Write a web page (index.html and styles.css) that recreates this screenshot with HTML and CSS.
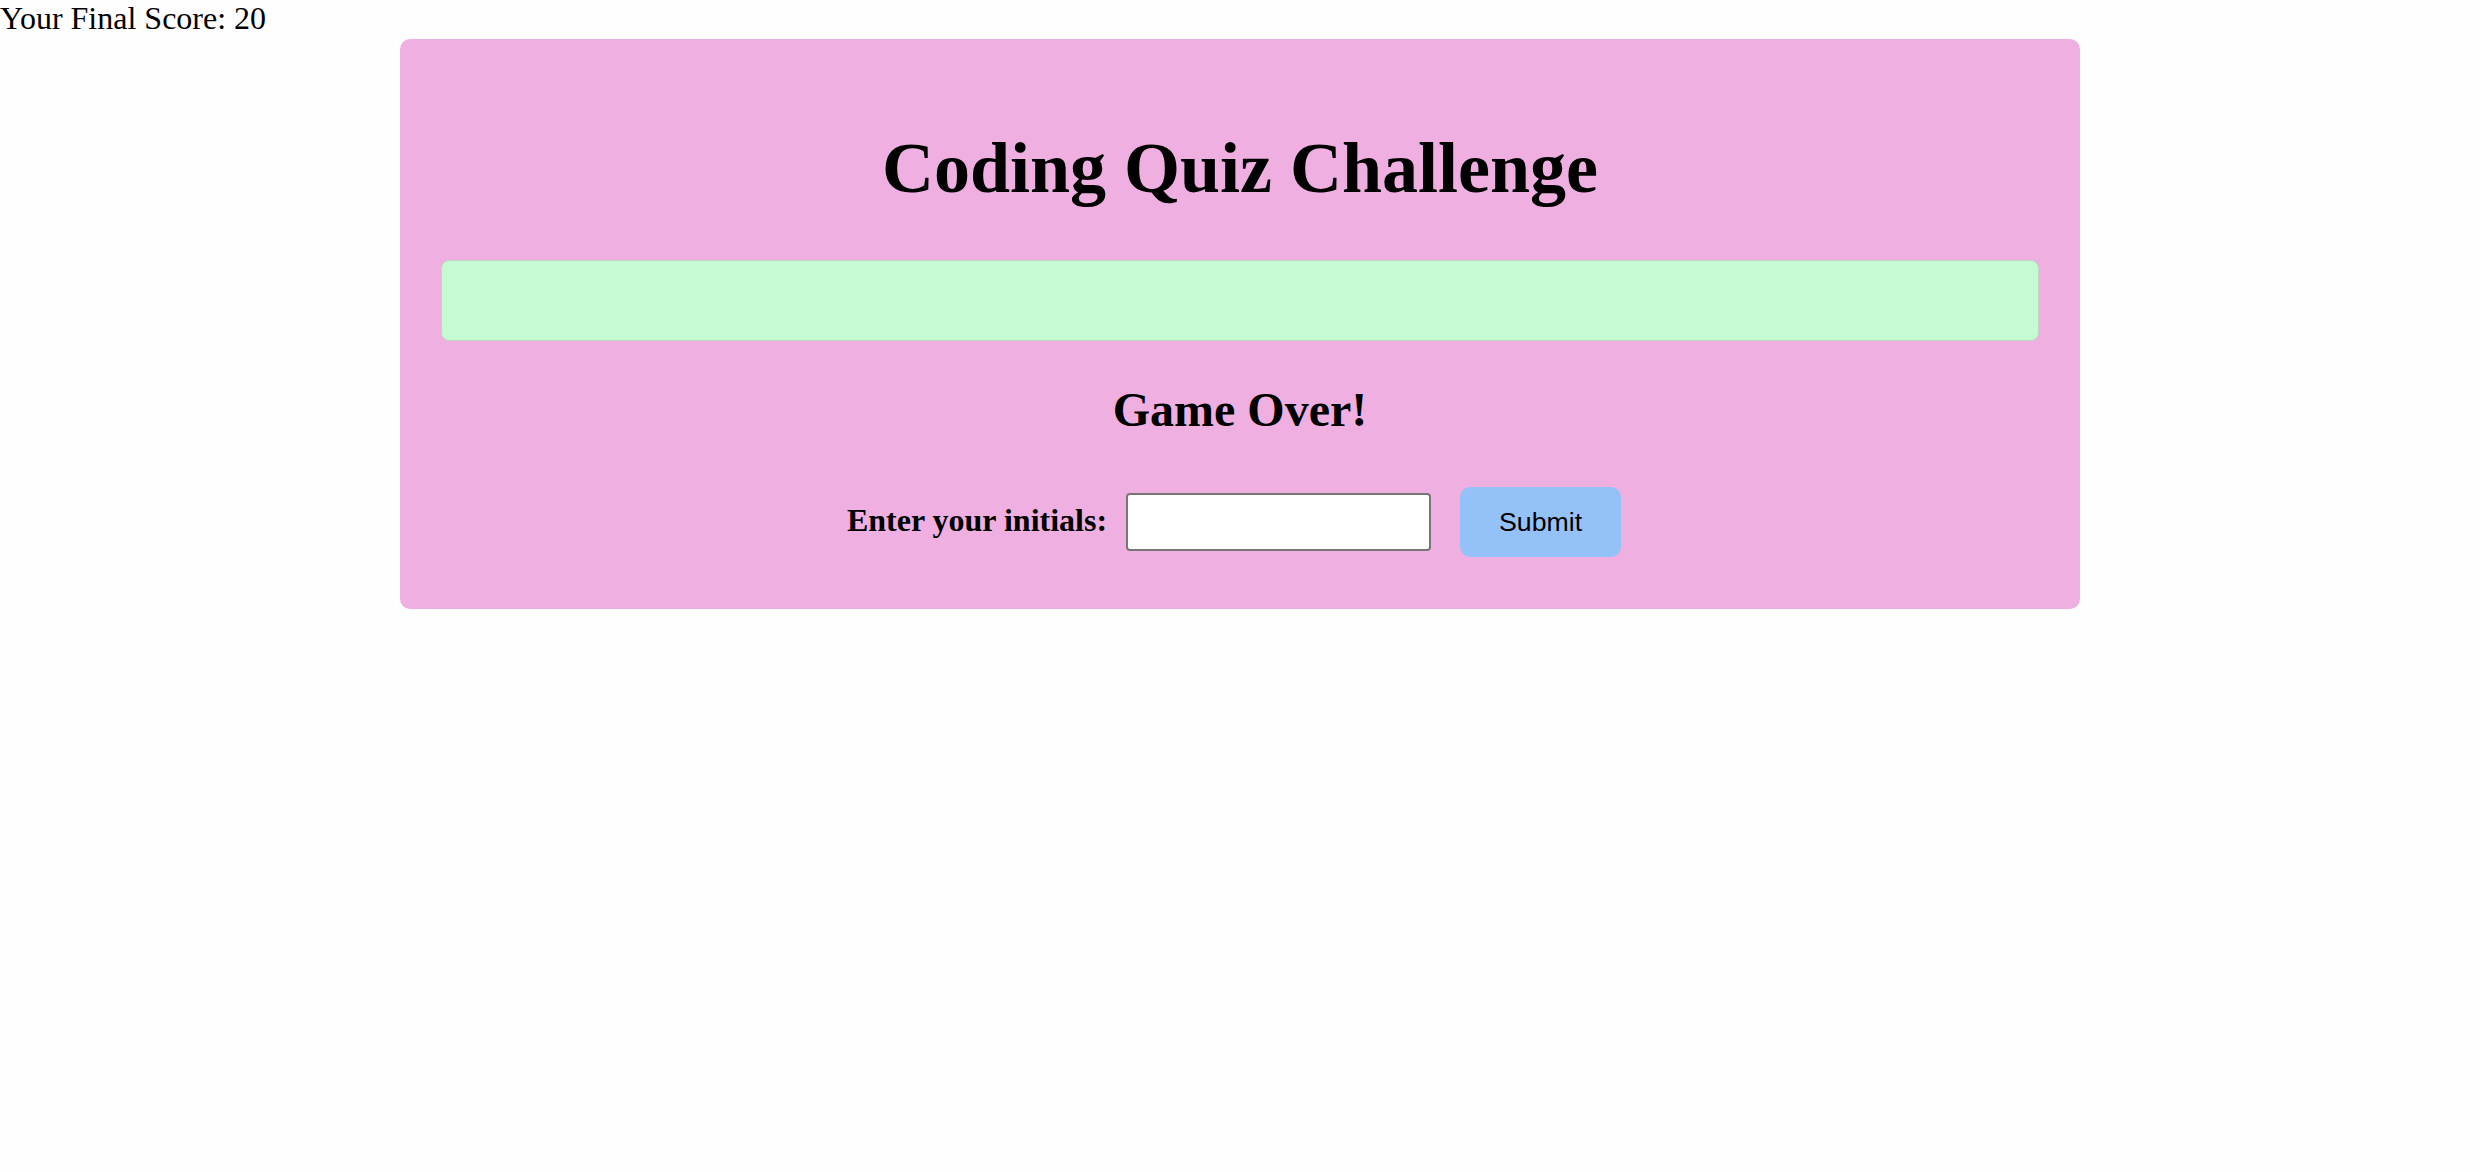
FILE: index.html
```html
<!DOCTYPE html>
<html>
<head>
<meta charset="utf-8">
<title>Coding Quiz Challenge</title>
<link rel="stylesheet" href="styles.css">
</head>
<body>
<div class="score">Your Final Score: 20</div>
<main class="card">
  <h1 class="title">Coding Quiz Challenge</h1>
  <div class="feedback"></div>
  <h2 class="over">Game Over!</h2>
  <form class="entry">
    <label class="label" for="initials">Enter your initials:</label>
    <input class="field" id="initials" type="text">
    <button class="submit" type="button">Submit</button>
  </form>
</main>
</body>
</html>
```

FILE: styles.css
```css
html, body {
  margin: 0;
  padding: 0;
  background: #fefefe;
}
body {
  font-family: "Liberation Serif", "Times New Roman", serif;
  color: #000;
}
.score {
  font-size: 32px;
  line-height: 37px;
  height: 39px;
}
.card {
  width: 1680px;
  box-sizing: border-box;
  margin: 0 auto;
  background: #efb0e1;
  border-radius: 10px;
  padding: 40px 41px 52px;
  text-align: center;
}
.title {
  font-size: 72px;
  font-weight: bold;
  line-height: 83px;
  margin: 48px 0 50px;
}
.feedback {
  height: 79px;
  background: #c5fbd3;
  border: 1px solid #bcd6c2;
  border-radius: 8px;
}
.over {
  font-size: 48px;
  font-weight: bold;
  line-height: 55px;
  margin: 41px 0 40px;
}
.entry {
  display: flex;
  justify-content: center;
  align-items: center;
  margin: 0;
  padding: 10px 12px 0 0;
}
.label {
  font-size: 32px;
  font-weight: bold;
  line-height: 37px;
  margin-right: 19px;
  position: relative;
  top: -2px;
}
.field {
  width: 305px;
  height: 58px;
  box-sizing: border-box;
  border: 2px solid #767676;
  border-radius: 4px;
  background: #fff;
  margin: 0 29px 0 0;
  padding: 2px 4px;
  font-size: 26px;
}
.submit {
  font-family: "Liberation Sans", Arial, sans-serif;
  font-size: 26.67px;
  line-height: 30px;
  padding: 20px 39px;
  border: none;
  border-radius: 10px;
  background: #95c1f9;
  color: #000;
  margin: 0;
}
```
